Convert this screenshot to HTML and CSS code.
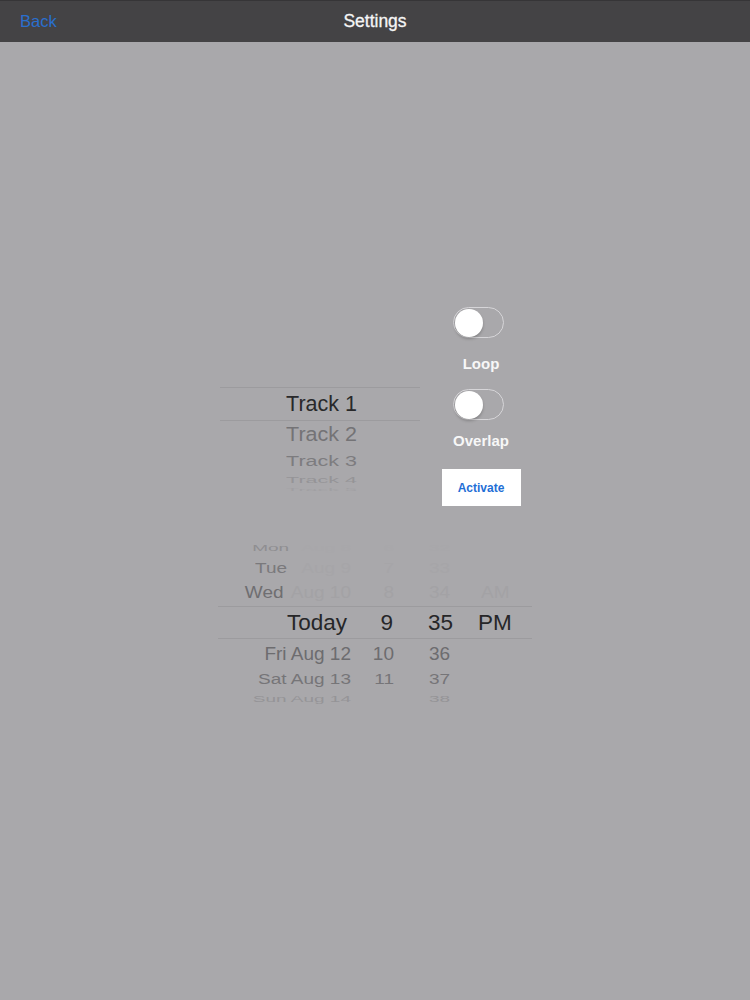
FILE: index.html
```html
<!DOCTYPE html>
<html>
<head>
<meta charset="utf-8">
<link rel="stylesheet" href="styles.css">
</head>
<body>
<header class="navbar">
  <span class="back">Back</span>
  <span class="title">Settings</span>
  <span class="spacer"></span>
</header>
<main class="content">
  <section class="top">
    <div class="track-picker">
      <div class="trow sel"><span>Track 1</span></div>
      <div class="trow t2"><span>Track 2</span></div>
      <div class="trow t3"><span>Track 3</span></div>
      <div class="trow t4"><span>Track 4</span></div>
      <div class="trow t5"><span>Track 5</span></div>
    </div>
    <div class="controls">
      <div class="toggle"><div class="knob"></div></div>
      <div class="label loop">Loop</div>
      <div class="toggle t-second"><div class="knob"></div></div>
      <div class="label overlap">Overlap</div>
      <div class="button">Activate</div>
    </div>
  </section>
  <section class="date-picker">
    <div class="drow mon">
      <span class="c-date"><span class="strong">Mon</span><span class="ghost"> Aug 8</span></span>
      <span class="c-hour ghost">6</span><span class="c-min ghost">32</span><span class="c-ap"></span>
    </div>
    <div class="drow tue">
      <span class="c-date"><span class="strong">Tue</span><span class="ghost"> Aug 9</span></span>
      <span class="c-hour ghost">7</span><span class="c-min ghost">33</span><span class="c-ap"></span>
    </div>
    <div class="drow wed">
      <span class="c-date"><span class="strong">Wed</span><span class="ghost"> Aug 10</span></span>
      <span class="c-hour ghost">8</span><span class="c-min ghost">34</span><span class="c-ap ghost">AM</span>
    </div>
    <div class="drow today">
      <span class="c-date today-date">Today</span>
      <span class="c-hour">9</span><span class="c-min">35</span><span class="c-ap">PM</span>
    </div>
    <div class="drow fri">
      <span class="c-date">Fri Aug 12</span>
      <span class="c-hour">10</span><span class="c-min">36</span><span class="c-ap"></span>
    </div>
    <div class="drow sat">
      <span class="c-date">Sat Aug 13</span>
      <span class="c-hour">11</span><span class="c-min">37</span><span class="c-ap"></span>
    </div>
    <div class="drow sun">
      <span class="c-date">Sun Aug 14</span>
      <span class="c-hour"></span><span class="c-min">38</span><span class="c-ap"></span>
    </div>
  </section>
</main>
</body>
</html>
```

FILE: styles.css
```css
html, body {
  margin: 0;
  padding: 0;
}
body {
  background: #a9a8ab;
  font-family: "Liberation Sans", Arial, sans-serif;
  width: 750px;
  height: 1000px;
  overflow: hidden;
}
.navbar {
  height: 42px;
  box-sizing: border-box;
  background: #444345;
  border-top: 1px solid #363537;
  display: flex;
  align-items: center;
  padding: 0 20px;
}
.back {
  width: 80px;
  color: #2a6fce;
  font-size: 16.5px;
}
.title {
  flex: 1;
  text-align: center;
  color: #f5f5f5;
  font-size: 17.5px;
  -webkit-text-stroke: 0.3px #f5f5f5;
}
.spacer {
  width: 80px;
}
.content {
  padding-top: 265px;
}
.top {
  display: flex;
  align-items: flex-start;
  margin-left: 220px;
}
.track-picker {
  width: 200px;
  padding-top: 80px;
  display: flex;
  flex-direction: column;
}
.trow {
  display: flex;
  justify-content: center;
  align-items: center;
  font-size: 21.5px;
  overflow: hidden;
}
.trow span {
  display: inline-block;
  margin-left: 3px;
}
.trow.sel {
  height: 32px;
  border-top: 1px solid #9c9b9e;
  border-bottom: 1px solid #9c9b9e;
  color: #28282a;
}
.trow.t2 {
  height: 28px;
  color: #747376;
}
.trow.t2 span { transform: scaleY(0.92); }
.trow.t3 {
  height: 24px;
  color: #7d7c7f;
}
.trow.t3 span { transform: scaleY(0.72); }
.trow.t4 {
  height: 14px;
  color: #959497;
}
.trow.t4 span { transform: scaleY(0.42); }
.trow.t5 {
  height: 6px;
  color: #a09fa2;
}
.trow.t5 span { transform: scaleY(0.15); }

.controls {
  width: 80px;
  margin-left: 21px;
  display: flex;
  flex-direction: column;
  align-items: center;
}
.toggle {
  width: 51px;
  height: 31px;
  box-sizing: border-box;
  border: 1.5px solid #d6d5d8;
  border-radius: 16px;
  display: flex;
  align-items: center;
  padding-left: 0.5px;
  margin-right: 5px;
}
.knob {
  width: 28px;
  height: 28px;
  border-radius: 50%;
  background: #ffffff;
  box-shadow: 0 2px 3px rgba(0, 0, 0, 0.22);
}
.label {
  color: #f7f7f7;
  font-weight: bold;
  font-size: 15px;
  line-height: 18px;
}
.loop {
  margin-top: 17px;
}
.t-second {
  margin-top: 16px;
}
.overlap {
  margin-top: 12px;
}
.button {
  margin-top: 19px;
  width: 79px;
  height: 37px;
  background: #ffffff;
  color: #1f6fd6;
  font-weight: bold;
  font-size: 12px;
  display: flex;
  align-items: center;
  justify-content: center;
}

.date-picker {
  margin-top: 33px;
  margin-left: 218px;
  width: 314px;
  display: flex;
  flex-direction: column;
}
.drow {
  display: flex;
  align-items: center;
  font-size: 19px;
  overflow: hidden;
  white-space: nowrap;
}
.drow > span {
  display: inline-block;
}
.c-date {
  width: 133px;
  text-align: right;
}
.c-hour {
  width: 43px;
  text-align: right;
}
.c-min {
  width: 52px;
  margin-left: 35px;
  text-align: left;
}
.c-ap {
  width: 51px;
  text-align: left;
}
.mon {
  height: 18px;
  color: #8f8e91;
}
.mon > span { transform: scaleY(0.5); }
.mon .ghost { color: #a8a7aa; }
.mon .strong { margin-right: 8px; }
.tue {
  height: 22px;
  color: #7a797c;
}
.tue > span { transform: scaleY(0.78); }
.tue .ghost { color: #a6a5a8; }
.tue .strong { margin-right: 10px; }
.wed {
  height: 27px;
  color: #6f6e71;
}
.wed > span { transform: scaleY(0.9); }
.wed .ghost { color: #a3a2a5; }
.wed .strong { margin-right: 3px; }
.today {
  height: 31px;
  border-top: 1px solid #9c9b9e;
  border-bottom: 1px solid #9c9b9e;
  color: #262628;
  font-size: 22.5px;
}
.today-date {
  padding-right: 4px;
  box-sizing: border-box;
}
.today .c-hour {
  width: 42px;
}
.today .c-min {
  margin-left: 35px;
  width: 51px;
}
.today .c-ap {
  margin-left: -1px;
}
.fri {
  height: 29px;
  color: #6d6c6f;
}
.fri > span { transform: scaleY(0.95); }
.sat {
  height: 22px;
  color: #767578;
}
.sat > span { transform: scaleY(0.8); }
.sun {
  height: 18px;
  color: #959497;
}
.sun > span { transform: scaleY(0.5); }
```
